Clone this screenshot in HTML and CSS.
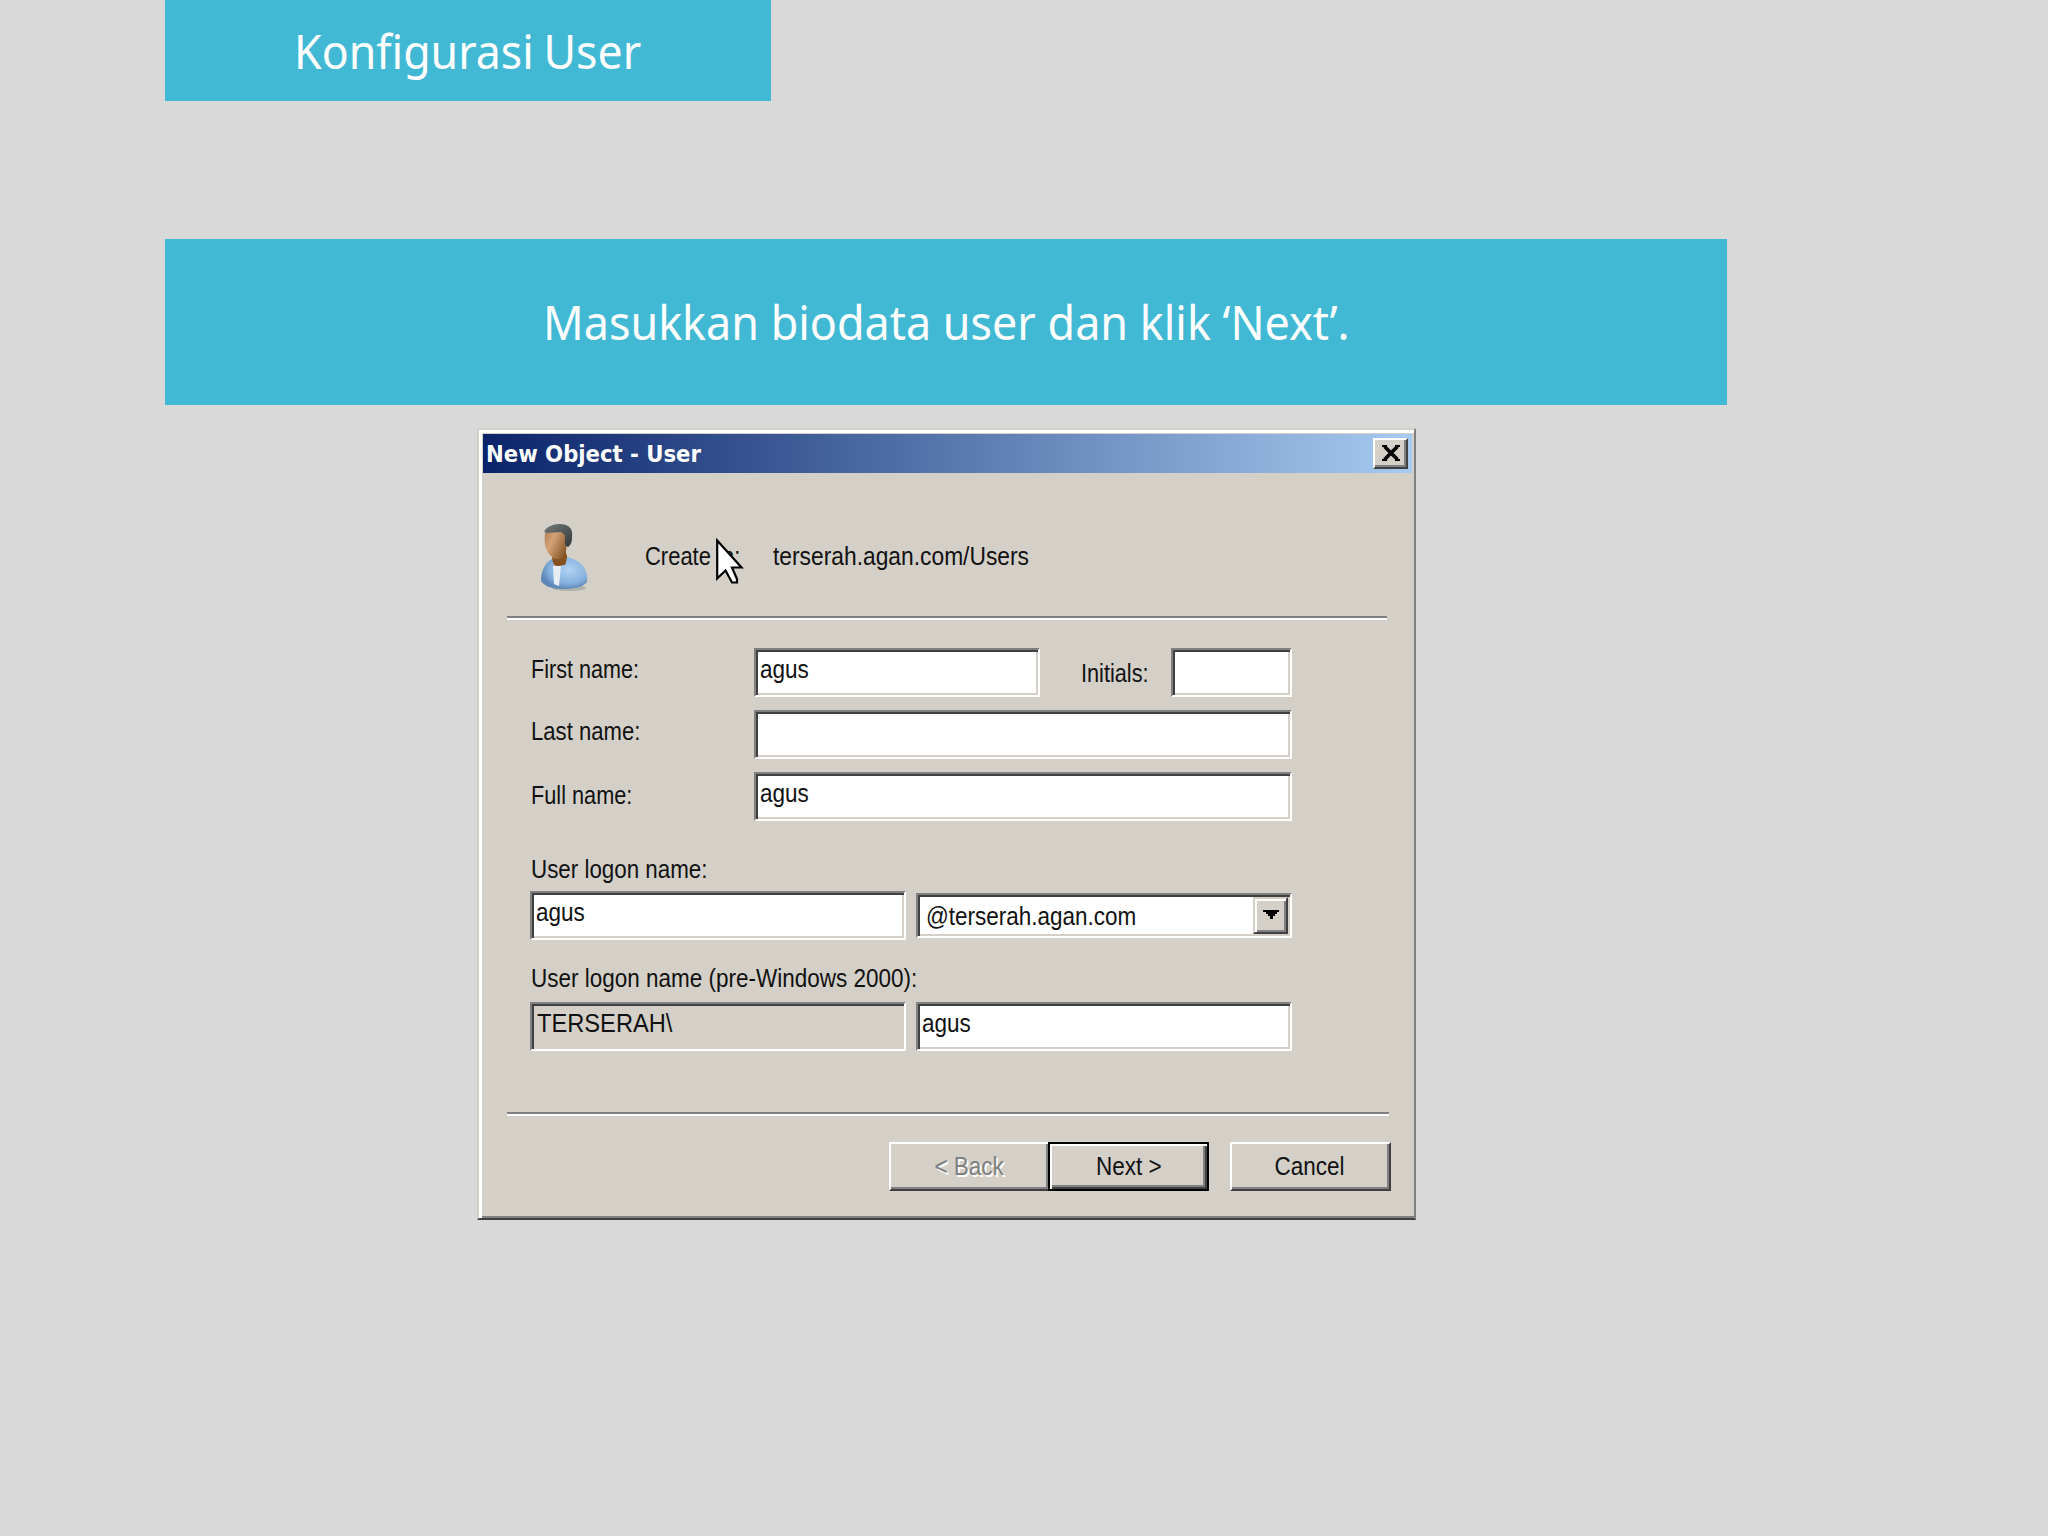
FILE: index.html
```html
<!DOCTYPE html>
<html lang="id">
<head>
    <meta charset="UTF-8">
    <meta name="viewport" content="width=device-width, initial-scale=1.0">
    <title>Konfigurasi User</title>
    <link rel="stylesheet" href="styles.css">
</head>
<body>
    <h1 class="banner banner-title"><span class="title-text">Konfigurasi User</span></h1>
    <p class="banner banner-info"><span class="info-text">Masukkan biodata user dan klik ‘Next’.</span></p>

    <div class="dialog">
        <div class="titlebar">
            <span class="titlebar-text">New Object - User</span>
            <button class="close" aria-label="Close">
                <svg width="18" height="16" viewBox="0 0 18 16"><path d="M2.500 1.500l13 13M15.500 1.500l-13 13" stroke="#000" stroke-width="3.600"/><path d="M0 0h5v2H0zM13 0h5v2h-5zM0 14h5v2H0zM13 14h5v2h-5z"/></svg>
            </button>
        </div>

        <div class="header">
            <svg class="user-icon" width="48" height="68" viewBox="0 0 48 68">
                <defs>
                    <linearGradient id="face" x1="0" y1="0" x2="1" y2="0.6">
                        <stop offset="0" stop-color="#b07f50"/>
                        <stop offset="0.4" stop-color="#d3a276"/>
                        <stop offset="1" stop-color="#8a5a2c"/>
                    </linearGradient>
                    <radialGradient id="shirt" cx="0.6" cy="0.4" r="0.6">
                        <stop offset="0" stop-color="#b0d2f3"/>
                        <stop offset="0.7" stop-color="#86b2df"/>
                        <stop offset="1" stop-color="#5d87b8"/>
                    </radialGradient>
                    <linearGradient id="hair" x1="0" y1="0" x2="1" y2="1">
                        <stop offset="0" stop-color="#747b7b"/>
                        <stop offset="1" stop-color="#323838"/>
                    </linearGradient>
                </defs>
                <ellipse cx="28" cy="64" rx="17" ry="3" fill="#b3b0a8"/>
                <path d="M12 30l12-6 2 9-1 8-9 2-5-5z" fill="#86501f"/>
                <path d="M11 35C4 39 0 47 0 57c3 5 11 8 22 8 12 0 20-2 24-7 2-12-6-22-20-25l-2 8-11 1z" fill="url(#shirt)"/>
                <path d="M12 42h8l-2 20-5-2z" fill="#e9edf4"/>
                <path d="M11 32l2 9 6 1 6-3 1-8z" fill="#86501f"/>
                <path d="M4 9c5-3 20-3 22 2 0 8 0 16-3 21-3 5-10 4-14-1C4 26 3 18 4 9z" fill="url(#face)"/>
                <path d="M4 6C8 1 14 0 20 0c9 1 12 5 11 13 0 5-1 8-4 10l-3-2V11L20 8 5 9 3 7z" fill="url(#hair)"/>
            </svg>
            <span class="text create">Create in:</span>
            <span class="text path">terserah.agan.com/Users</span>
            <svg class="cursor" width="28" height="46" viewBox="0 0 28 46"><path d="M1.200 2.500v38l8.300-8 6.500 12h5V41l-5-11.500h9.500z" fill="#fff" stroke="#000" stroke-width="2.200"/></svg>
        </div>

        <div class="rule"></div>

        <div class="names">
            <span class="text label-first">First name:</span>
            <div class="first-row">
                <div class="field first"><span class="text">agus</span></div>
                <span class="text label-initials">Initials:</span>
                <div class="field initials"></div>
            </div>
            <span class="text label-last">Last name:</span>
            <div class="field"></div>
            <span class="text label-full">Full name:</span>
            <div class="field"><span class="text">agus</span></div>
        </div>

        <div class="logon">
            <span class="text label-logon">User logon name:</span>
            <div class="logon-row">
                <div class="field"><span class="text">agus</span></div>
                <div class="field combo">
                    <span class="text">@terserah.agan.com</span>
                    <button class="drop" aria-label="Open">
                        <svg width="16" height="9" viewBox="0 0 16 9"><path d="M0 0h16v2h-2v2h-2v2h-2v3H7V6H5V4H3V2H0z"/></svg>
                    </button>
                </div>
            </div>
            <span class="text label-pre">User logon name (pre-Windows 2000):</span>
            <div class="logon-row pre-row">
                <div class="field readonly"><span class="text">TERSERAH\</span></div>
                <div class="field"><span class="text">agus</span></div>
            </div>
        </div>

        <div class="rule rule-bottom"></div>

        <div class="buttons">
            <button class="btn back" disabled><span class="text">&lt; Back</span></button>
            <button class="btn next"><span class="text">Next &gt;</span></button>
            <button class="btn cancel"><span class="text">Cancel</span></button>
        </div>
    </div>
</body>
</html>
```
FILE: styles.css
```css
* {
    box-sizing: border-box;
}
body {
    margin: 0;
    height: 1536px;
    overflow: hidden;
    background-color: #d9d9d9;
    font-family: "Liberation Sans", Arial, sans-serif;
}
svg {
    display: block;
}
button {
    padding: 0;
    font-family: inherit;
}

/* slide banners */
.banner {
    display: flex;
    align-items: center;
    justify-content: center;
    margin: 0 0 0 165px;
    background-color: #42b9d4;
    color: #fff;
    font-family: "Noto Sans", sans-serif;
    font-size: 48px;
    font-weight: 400;
    line-height: 60px;
    white-space: nowrap;
}
.banner-title {
    width: 606px;
    height: 101px;
}
.banner-info {
    width: 1562px;
    height: 166px;
    margin-top: 138px;
}
.title-text {
    word-spacing: -2px;
    transform: scaleX(0.93);
}
.info-text {
    transform: scaleX(0.935);
}

/* dialog window */
.dialog {
    width: 939px;
    height: 792px;
    margin: 23px 0 0 477px;
    padding: 4px 2px 0 5px;
    border: 2px solid #d4d0c8;
    border-right-color: #808080;
    border-bottom-color: #404040;
    background-color: #d4d0c8;
    box-shadow: inset 3px 3px #fff, inset 0 -2px #808080;
}
.titlebar {
    display: flex;
    align-items: center;
    justify-content: space-between;
    height: 39px;
    margin-left: -1px;
    padding: 0 4px 0 3px;
    background: linear-gradient(to right, #0a246a, #a6caf0);
}
.titlebar-text {
    color: #fff;
    font-family: "DejaVu Sans Condensed", "DejaVu Sans", sans-serif;
    font-size: 23px;
    font-weight: 700;
    white-space: nowrap;
    transform: scaleX(1.025);
    transform-origin: left;
}
.close {
    display: flex;
    justify-content: center;
    width: 35px;
    height: 31px;
    padding-top: 5px;
    border: 2px solid #fff;
    border-right-color: #404040;
    border-bottom-color: #404040;
    background-color: #d4d0c8;
    box-shadow: inset -2px -2px #808080;
}

.text {
    display: inline-block;
    color: #111;
    font-size: 26px;
    line-height: 30px;
    white-space: nowrap;
    transform: scaleX(0.865);
    transform-origin: left;
}

.header {
    display: flex;
    position: relative;
    height: 143px;
    padding: 51px 0 0 57px;
}
.create {
    width: 128px;
    margin: 17px 0 0 56px;
    transform: scaleX(0.845);
}
.path {
    margin-top: 17px;
    transform: scaleX(0.877);
}
.cursor {
    position: absolute;
    left: 232px;
    top: 65px;
}

.rule {
    width: 880px;
    height: 4px;
    margin-left: 23px;
    border-top: 2px solid #808080;
    border-bottom: 2px solid #fff;
}

.names {
    display: grid;
    grid-template-columns: 223px 538px;
    grid-template-rows: 49px 49px 49px;
    row-gap: 13px;
    margin: 28px 0 0 47px;
}
.first-row {
    display: flex;
}
.field {
    height: 49px;
    padding: 2px 0 0 2px;
    border: 2px solid #808080;
    border-right-color: #fff;
    border-bottom-color: #fff;
    background-color: #fff;
    box-shadow: inset 2px 2px #404040, inset -2px -2px #d4d0c8;
}
.field .text {
    margin: 2px 0 0 2px;
}
.first {
    width: 286px;
}
.initials {
    width: 121px;
}
.label-first {
    margin-top: 6px;
    transform: scaleX(0.83);
}
.label-last {
    margin-top: 6px;
    transform: scaleX(0.85);
}
.label-full {
    margin-top: 8px;
    transform: scaleX(0.835);
}
.label-initials {
    width: 90px;
    margin: 10px 0 0 41px;
    transform: scaleX(0.835);
}

.logon {
    display: flex;
    flex-direction: column;
    align-items: flex-start;
    margin: 33px 0 0 46px;
}
.logon-row {
    display: grid;
    grid-template-columns: 376px 376px;
    column-gap: 10px;
    margin-top: 7px;
}
.label-logon {
    margin-left: 1px;
    transform: scaleX(0.86);
}
.label-pre {
    margin: 23px 0 0 1px;
}
.pre-row {
    margin-top: 9px;
}
.combo {
    display: flex;
    justify-content: space-between;
    height: 45px;
    margin-top: 2px;
    padding: 2px;
}
.combo .text {
    width: 240px;
    margin: 4px 0 0 6px;
}
.drop {
    display: flex;
    justify-content: center;
    width: 35px;
    height: 37px;
    padding-top: 11px;
    border: 2px solid #d4d0c8;
    border-right-color: #404040;
    border-bottom-color: #404040;
    background-color: #d4d0c8;
    box-shadow: inset 2px 2px #fff, inset -2px -2px #808080;
}
.readonly {
    background-color: #d4d0c8;
}
.readonly .text {
    margin-left: 3px;
    transform: scaleX(0.91);
}

.rule-bottom {
    width: 882px;
    margin-top: 61px;
}
.buttons {
    display: flex;
    margin: 26px 0 0 405px;
}
.btn {
    width: 161px;
    height: 49px;
    padding-bottom: 2px;
    border: 2px solid #fff;
    border-right-color: #404040;
    border-bottom-color: #404040;
    background-color: #d4d0c8;
    box-shadow: inset -2px -2px #808080;
}
.btn .text {
    transform-origin: center;
}
.back {
    width: 159px;
    border-right-width: 0;
}
.back .text {
    color: #808080;
    text-shadow: 2px 2px #fff;
}
.next {
    border-color: #000;
    box-shadow: inset 2px 2px #fff, inset -2px -2px #404040, inset -4px -4px #808080;
}
.cancel {
    margin-left: 21px;
}
.cancel .text {
    margin-right: 2px;
}
```
